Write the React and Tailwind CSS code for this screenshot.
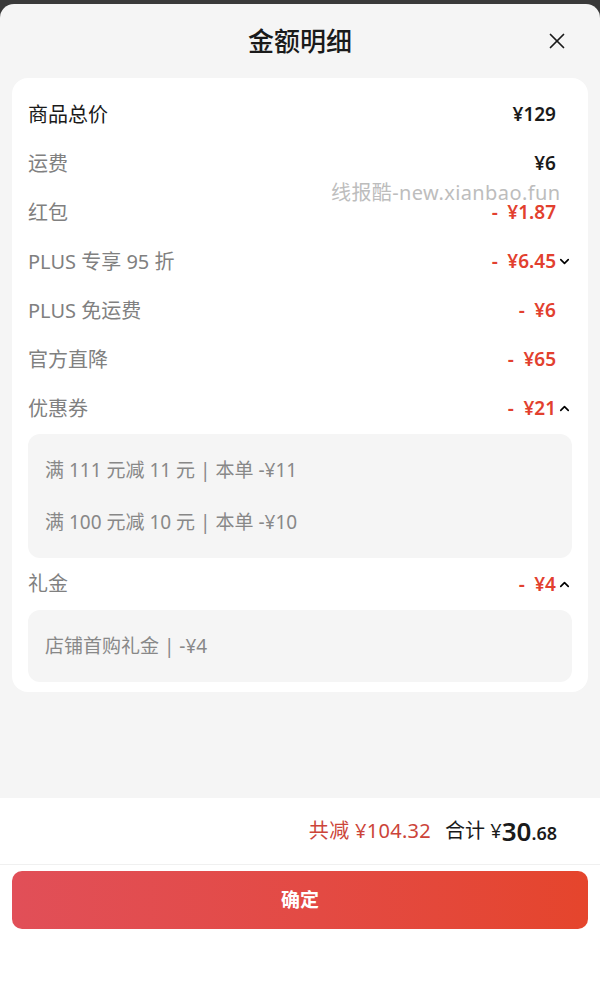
import { ChevronDown, ChevronUp, X } from 'lucide-react';

const font = { fontFamily: '"Noto Sans", "Noto Sans CJK SC", sans-serif' };

const rows = [
  { label: '商品总价', value: '¥129', dark: true },
  { label: '运费', value: '¥6' },
  { label: '红包', value: '-\u2002¥1.87', red: true },
  { label: 'PLUS 专享 95 折', value: '-\u2002¥6.45', red: true, chevron: 'down' },
  { label: 'PLUS 免运费', value: '-\u2002¥6', red: true },
  { label: '官方直降', value: '-\u2002¥65', red: true },
  { label: '优惠券', value: '-\u2002¥21', red: true, chevron: 'up' },
];

function Row({ label, value, dark, red, chevron, h = 'h-[49px]' }) {
  return (
    <div className={`flex items-center justify-between ${h}`}>
      <span className={`text-[20px] ${dark ? 'text-[#1a1a1a]' : 'text-[#808080]'}`}>{label}</span>
      <div className="flex items-center">
        <span className={`text-[19px] font-semibold ${red ? 'text-[#e2402e]' : 'text-[#1a1a1a]'}`}>{value}</span>
        <span className="w-[16px] flex justify-end">
          {chevron === 'down' && <ChevronDown size={15} strokeWidth={2.6} className="text-black" />}
          {chevron === 'up' && <ChevronUp size={15} strokeWidth={2.6} className="text-black" />}
        </span>
      </div>
    </div>
  );
}

export default function App() {
  return (
    <div className="h-[981px] bg-[#3a3a3a] flex flex-col relative" style={font}>
      <div className="h-[4px]" />
      <div className="flex-1 bg-[#f5f5f5] rounded-t-[14px] flex flex-col">
        <div className="h-[74px] flex items-center justify-center relative">
          <h1 className="text-[26px] font-medium text-[#1a1a1a]">金额明细</h1>
          <X size={26} strokeWidth={1.6} className="absolute right-[30px] text-[#1a1a1a]" />
        </div>

        <div className="mx-3 bg-white rounded-[16px] px-4 pt-3 pb-[10px]">
          {rows.map((r) => (
            <Row key={r.label} {...r} />
          ))}
          <div className="mt-px bg-[#f5f5f5] rounded-[12px] py-[10px] pl-[17px]">
            <p className="h-[52px] flex items-center text-[19px] text-[#888]">满 111 元减 11 元 | 本单 -¥11</p>
            <p className="h-[52px] flex items-center text-[19px] text-[#888]">满 100 元减 10 元 | 本单 -¥10</p>
          </div>
          <Row label="礼金" value={'-\u2002¥4'} red chevron="up" h="h-[52px]" />
          <div className="bg-[#f5f5f5] rounded-[12px] h-[72px] pl-[17px] flex items-center">
            <p className="text-[19px] text-[#888]">店铺首购礼金 | -¥4</p>
          </div>
        </div>

        <div className="flex-1" />

        <div className="bg-white">
          <div className="h-[66px] flex items-center justify-end pr-[43px]">
            <span className="text-[20px] tracking-[0.3px] text-[#cc4439] mr-[14px]">共减 ¥104.32</span>
            <span className="text-[20px] text-[#1a1a1a]">合计 ¥</span>
            <span className="text-[26px] font-semibold text-[#1a1a1a] leading-none">30</span>
            <span className="text-[18px] font-semibold text-[#1a1a1a] self-center mt-[5px]">.68</span>
          </div>
          <div className="h-px bg-[#f0f0f0]" />
          <div className="pt-[6px] pb-[52px] px-3">
            <button className="w-full h-[58px] rounded-[10px] bg-gradient-to-r from-[#e14f58] to-[#e5452c] text-white text-[19px] font-semibold">
              确定
            </button>
          </div>
        </div>
      </div>

      <div className="absolute left-[331px] top-[180px] text-[20px] leading-[26px] tracking-[0.4px] text-[#bdbdbd] pointer-events-none">
        线报酷-new.xianbao.fun
      </div>
    </div>
  );
}
